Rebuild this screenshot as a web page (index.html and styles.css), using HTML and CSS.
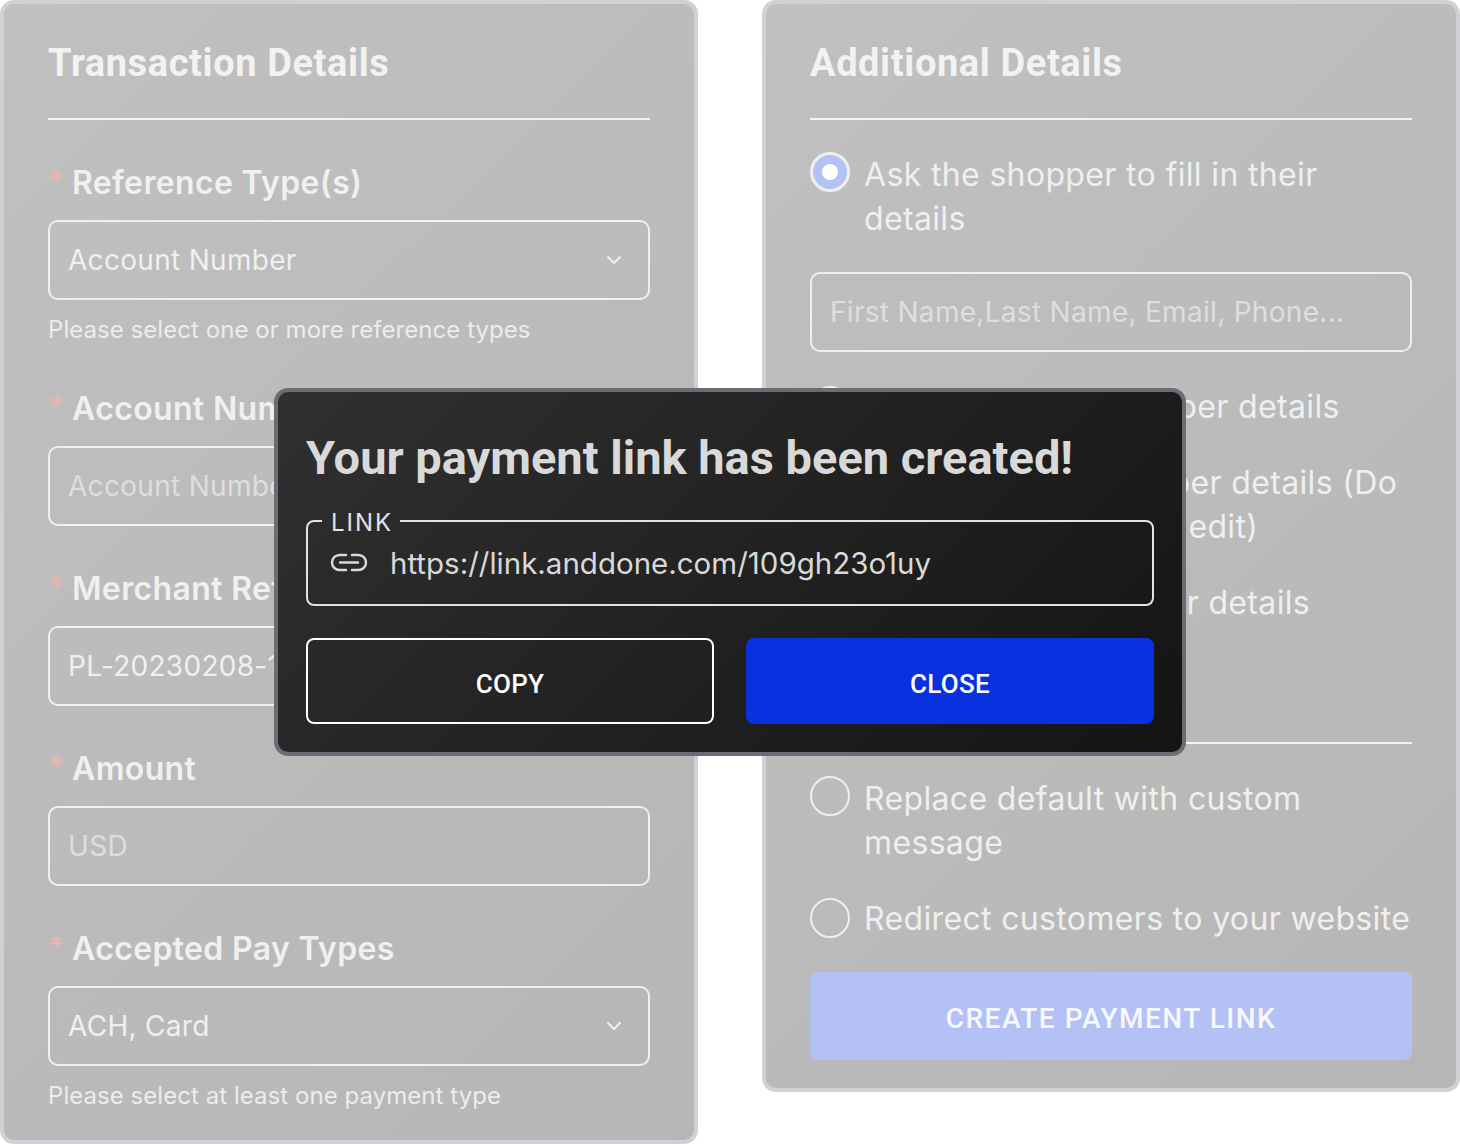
FILE: index.html
```html
<!DOCTYPE html>
<html lang="en">
<head>
<meta charset="utf-8">
<title>Payment link</title>
<link rel="stylesheet" href="styles.css">
</head>
<body>
<main class="page">
  <section class="card card-left">
    <header class="card-head"><h2>Transaction Details</h2></header>
    <div class="fields">
      <div class="field">
        <div class="label"><span class="req">*</span>Reference Type(s)</div>
        <div class="input select"><span>Account Number</span>
          <svg class="chev" viewBox="0 0 16 10"><path d="M1.5 1.5 8 8l6.5-6.5"/></svg></div>
        <p class="help">Please select one or more reference types</p>
      </div>
      <div class="field">
        <div class="label"><span class="req">*</span>Account Number</div>
        <div class="input ph"><span>Account Number</span></div>
      </div>
      <div class="field">
        <div class="label"><span class="req">*</span>Merchant Reference</div>
        <div class="input"><span>PL-20230208-1234</span></div>
      </div>
      <div class="field">
        <div class="label"><span class="req">*</span>Amount</div>
        <div class="input ph"><span>USD</span></div>
      </div>
      <div class="field">
        <div class="label"><span class="req">*</span>Accepted Pay Types</div>
        <div class="input select"><span>ACH, Card</span>
          <svg class="chev" viewBox="0 0 16 10"><path d="M1.5 1.5 8 8l6.5-6.5"/></svg></div>
        <p class="help">Please select at least one payment type</p>
      </div>
    </div>
  </section>

  <section class="card card-right">
    <header class="card-head"><h2>Additional Details</h2></header>
    <div class="options">
      <div class="option"><span class="radio on"></span><span>Ask the shopper to fill in their details</span></div>
      <div class="input ph extra"><span>First Name,Last Name, Email, Phone...</span></div>
      <div class="option single tight"><span class="radio"></span><span>Prefilled, show shopper details</span></div>
      <div class="option"><span class="radio"></span><span>Prefilled, keep shopper details (Do not allow shopper to edit)</span></div>
      <div class="option single"><span class="radio"></span><span>Don't ask for shopper details</span></div>
    </div>
    <header class="card-head sub"></header>
    <div class="options">
      <div class="option"><span class="radio"></span><span>Replace default with custom message</span></div>
      <div class="option single"><span class="radio"></span><span>Redirect customers to your website</span></div>
    </div>
    <button class="create">CREATE PAYMENT LINK</button>
  </section>

  <div class="modal">
    <h1>Your payment link has been created!</h1>
    <fieldset class="link">
      <legend>LINK</legend>
      <svg class="link-icon" viewBox="0 0 38 19"><path d="M16 2H9.5a7.5 7.5 0 0 0 0 15H16M22 2h6.5a7.5 7.5 0 0 1 0 15H22M10 9.5h18"/></svg>
      <span>https://link.anddone.com/109gh23o1uy</span>
    </fieldset>
    <div class="actions">
      <button class="btn outline">COPY</button>
      <button class="btn solid">CLOSE</button>
    </div>
  </div>
</main>
</body>
</html>
```

FILE: styles.css
```css
* { box-sizing: border-box; }
html, body { margin: 0; background: #fff; }
body { font-family: Inter, "Liberation Sans", sans-serif; color: #f0f0f0; overflow: hidden; }
.page { position: relative; width: 1460px; height: 1144px; display: flex; gap: 64px; align-items: flex-start; }

.card { width: 698px; border: 4px solid #d0d1d4; border-radius: 14px; padding: 0 44px; background: linear-gradient(135deg, #c0c0c0, #b6b6b6); }
.card-left { height: 1144px; }
.card-right { height: 1092px; }
.card-head { height: 116px; border-bottom: 2px solid #f2f2f2; padding-top: 39px; }
.card-head h2 { margin: 0; font: 700 38px/40px Roboto, sans-serif; letter-spacing: .6px; color: #f2f2f2; }
.card-head.sub { height: 119px; padding: 0; }

.fields { margin-top: 42px; display: flex; flex-direction: column; gap: 42px; }
.label { display: flex; height: 40px; align-items: center; font-size: 32px; font-weight: 600; letter-spacing: .35px; color: #f0f0f0; margin-bottom: 18px; }
.req { width: 24px; color: #e9b5b0; font-size: 30px; line-height: 40px; font-weight: 600; transform: translateY(-2px); }
.input { display: flex; align-items: center; justify-content: space-between; height: 80px; border: 2px solid #f0f0f0; border-radius: 10px; padding: 0 18px; font-size: 28px; letter-spacing: .3px; color: #f0f0f0; }
.input.ph { color: #dedede; }
.chev { width: 16px; height: 10px; margin-right: 8px; fill: none; stroke: #f0f0f0; stroke-width: 2; }
.help { margin: 14px 0 0; font-size: 24px; letter-spacing: .05px; line-height: 32px; color: #ececec; }

.options { margin-top: 33px; display: flex; flex-direction: column; gap: 32px; }
.option { display: flex; gap: 14px; font-size: 32px; letter-spacing: .35px; line-height: 44px; color: #efefef; }
.radio { flex: none; width: 40px; height: 40px; margin-top: -1px; border: 2px solid #efefef; border-radius: 50%; }
.radio.on { border-width: 3px; background: #b3c1f5; display: flex; align-items: center; justify-content: center; }
.radio.on::after { content: ""; width: 16px; height: 16px; border-radius: 50%; background: #fff; }
.extra { margin-top: -1px; }
.tight { margin-top: 1px; }
.single .radio { margin-top: 1px; }

.create { display: block; width: 100%; height: 88px; margin-top: 31px; padding-top: 5px; border: 0; border-radius: 8px; background: #b3c1f5; color: #f7f8ff; font: 500 28px Roboto, sans-serif; letter-spacing: 1.5px; }

.modal { position: absolute; left: 274px; top: 388px; width: 912px; height: 368px; border: 4px solid #6a6d75; border-radius: 14px; padding: 0 28px; background: linear-gradient(135deg, #303030, #141414); color: #d9d9d9; }
.modal h1 { margin: 38px 0 0; font: 700 47px/56px Roboto, sans-serif; color: #d9d9d9; }
.link { display: flex; align-items: center; height: 99px; margin: 21px 0 0; padding: 0 22px 14px; border: 2px solid #e2e2e2; border-radius: 8px; min-width: 0; }
.link legend { margin-left: -8px; padding: 4px 7px 0 9px; font-size: 24px; letter-spacing: 2px; line-height: 24px; color: #e2e2e2; }
.link span { font-size: 29.5px; margin-left: 22px; }
.link-icon { width: 38px; height: 19px; fill: none; stroke: #d9d9d9; stroke-width: 2.5; stroke-linecap: round; }
.actions { display: flex; gap: 32px; margin-top: 32px; }
.btn { flex: 1; height: 86px; padding-top: 7px; border-radius: 8px; font: 500 26px Roboto, sans-serif; letter-spacing: .3px; color: #fff; }
.btn.outline { background: transparent; border: 2px solid #fff; }
.btn.solid { background: #0a31e0; border: 2px solid #0a31e0; }
```
